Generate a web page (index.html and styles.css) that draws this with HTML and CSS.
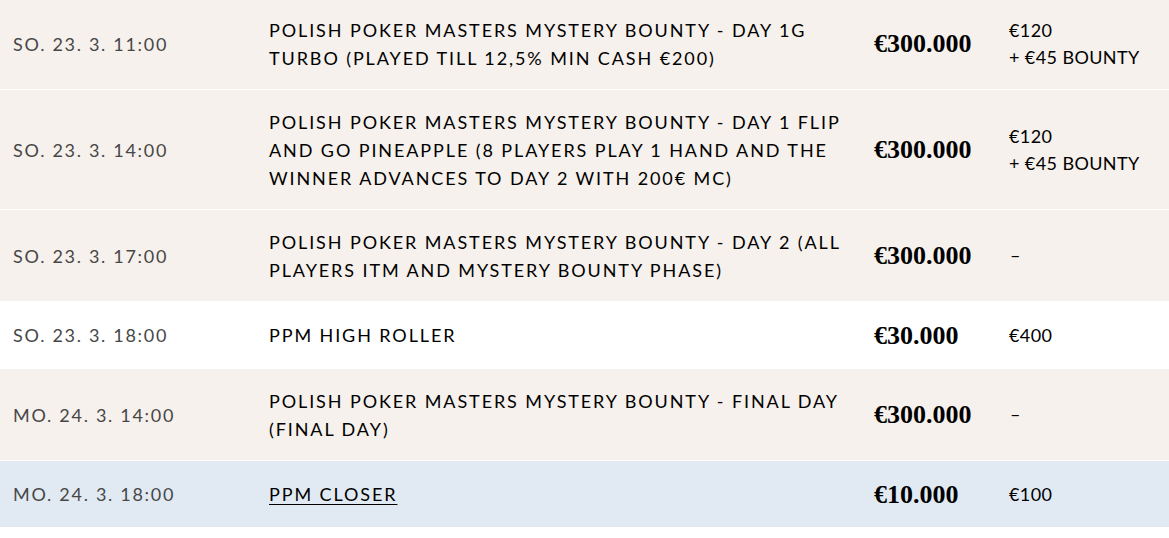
FILE: index.html
```html
<!DOCTYPE html>
<html lang="en">
<head>
    <meta charset="UTF-8">
    <meta name="viewport" content="width=device-width, initial-scale=1.0">
    <title>Turnierplan</title>
    <link rel="stylesheet" href="styles.css">
</head>
<body>
    <!-- Tournament schedule -->
    <div class="schedule">
        <div class="row">
            <div class="date">SO. 23. 3. 11:00</div>
            <div class="name">POLISH POKER MASTERS MYSTERY BOUNTY - DAY 1G TURBO (PLAYED TILL 12,5% MIN CASH €200)</div>
            <div class="prize">€300.000</div>
            <div class="buyin">€120<br>+ €45 BOUNTY</div>
        </div>
        <div class="row">
            <div class="date">SO. 23. 3. 14:00</div>
            <div class="name">POLISH POKER MASTERS MYSTERY BOUNTY - DAY 1 FLIP AND GO PINEAPPLE (8 PLAYERS PLAY 1 HAND AND THE WINNER ADVANCES TO DAY 2 WITH 200€ MC)</div>
            <div class="prize">€300.000</div>
            <div class="buyin">€120<br>+ €45 BOUNTY</div>
        </div>
        <div class="row">
            <div class="date">SO. 23. 3. 17:00</div>
            <div class="name">POLISH POKER MASTERS MYSTERY BOUNTY - DAY 2 (ALL PLAYERS ITM AND MYSTERY BOUNTY PHASE)</div>
            <div class="prize">€300.000</div>
            <div class="buyin dash">–</div>
        </div>
        <div class="row white">
            <div class="date">SO. 23. 3. 18:00</div>
            <div class="name">PPM HIGH ROLLER</div>
            <div class="prize">€30.000</div>
            <div class="buyin">€400</div>
        </div>
        <div class="row">
            <div class="date">MO. 24. 3. 14:00</div>
            <div class="name">POLISH POKER MASTERS MYSTERY BOUNTY - FINAL DAY (FINAL DAY)</div>
            <div class="prize">€300.000</div>
            <div class="buyin dash">–</div>
        </div>
        <div class="row current">
            <div class="date">MO. 24. 3. 18:00</div>
            <div class="name"><a href="#">PPM CLOSER</a></div>
            <div class="prize">€10.000</div>
            <div class="buyin">€100</div>
        </div>
    </div>
</body>
</html>
```

FILE: styles.css
```css
/* Page */
body {
    margin: 0;
    padding: 0;
    background: #ffffff;
    font-family: 'Lato', sans-serif;
    color: #000;
}

/* Schedule table */
.schedule {
    margin-top: -2px;
}

.row {
    display: grid;
    grid-template-columns: 256px 605px 135px 1fr;
    align-items: center;
    padding: 17.5px 0 17.5px 13px;
    background: #f6f1ec;
    border-bottom: 1px solid #ffffff;
}

.row.white {
    background: #ffffff;
}

.row.current {
    background: #e1eaf3;
}

.date {
    font-size: 18px;
    letter-spacing: 1.7px;
    color: #474747;
}

.name {
    font-size: 18px;
    line-height: 28px;
    letter-spacing: 1.9px;
    max-width: 595px;
    color: #000;
}

.name a {
    color: #000;
    text-decoration: underline;
    text-underline-offset: 3px;
}

.prize {
    font-family: 'Liberation Serif', serif;
    font-weight: bold;
    font-size: 26px;
    line-height: 31px;
    color: #000;
}

.buyin {
    font-size: 18px;
    line-height: 27px;
    letter-spacing: 0.4px;
    color: #000;
}

.buyin.dash {
    font-size: 18px;
    padding-left: 1px;
}
```
